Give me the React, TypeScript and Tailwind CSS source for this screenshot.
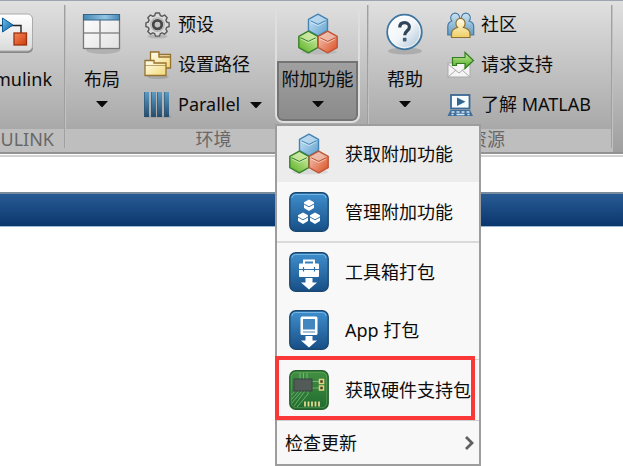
import type { ReactNode } from 'react';

const FONT = "font-['Noto_Sans','Noto_Sans_CJK_SC',sans-serif]";

function Hex({ x, y, fill, light, edge }: { x: number; y: number; fill: string; light: string; edge: string }) {
  return (
    <g transform={`translate(${x} ${y})`} strokeLinejoin="round">
      <path d="M0-10.8 9.5-5.6V5.6L0 10.8-9.5 5.6V-5.6Z" fill={fill} />
      <path d="M0-10 8.7-5.4 0-.8-8.7-5.4Z" fill={light} opacity=".75" />
      <path d="M-7.5-4.2 0-.6 7.5-4.2" fill="none" stroke={edge} strokeWidth="1" />
      <path d="M-7.5-3 0 .6 7.5-3" fill="none" stroke="#fff" strokeWidth=".8" opacity=".6" />
      <path d="M0-10.8 9.5-5.6V5.6L0 10.8-9.5 5.6V-5.6Z" fill="none" stroke={edge} strokeWidth="1.4" />
    </g>
  );
}

function CubesIcon() {
  return (
    <svg viewBox="0 0 40 42" className="h-[42px] w-10" aria-hidden="true">
      <defs>
        <linearGradient id="cb" x1="0" y1="0" x2="1" y2="1"><stop offset="0" stopColor="#d3eafb" /><stop offset="1" stopColor="#5b9ecb" /></linearGradient>
        <linearGradient id="cg" x1="1" y1="0" x2="0.2" y2="1"><stop offset="0" stopColor="#e0f6b8" /><stop offset="1" stopColor="#62b52c" /></linearGradient>
        <linearGradient id="cr" x1="0" y1="0" x2="1" y2="1"><stop offset="0" stopColor="#f2d3c6" /><stop offset="1" stopColor="#dc4a1c" /></linearGradient>
      </defs>
      <ellipse cx="21" cy="39" rx="18" ry="2.5" fill="#000" opacity=".08" />
      <Hex x={20} y={12} fill="url(#cb)" light="#b9d8ee" edge="#4483b3" />
      <Hex x={10.3} y={29} fill="url(#cg)" light="#cfeaa6" edge="#39802f" />
      <Hex x={29.7} y={29} fill="url(#cr)" light="#eec2b2" edge="#bf5638" />
    </svg>
  );
}

function SimulinkIcon() {
  return (
    <svg viewBox="0 0 42 42" className="h-[42px] w-[42px]" aria-hidden="true">
      <defs>
        <linearGradient id="sw" x1="0" y1="0" x2="0" y2="1"><stop offset="0" stopColor="#fff" /><stop offset="1" stopColor="#dadada" /></linearGradient>
        <linearGradient id="so" x1="0" y1="0" x2="1" y2="1"><stop offset="0" stopColor="#f4875a" /><stop offset="1" stopColor="#cf3c0c" /></linearGradient>
        <linearGradient id="sb" x1="0" y1="0" x2="1" y2="1"><stop offset="0" stopColor="#6fc0ec" /><stop offset="1" stopColor="#0a5c9c" /></linearGradient>
      </defs>
      <rect x="0" y="2" width="38" height="38" rx="5" fill="#888" />
      <rect x="0" y="1" width="37.500" height="37" rx="5" fill="url(#sw)" stroke="#aaa" strokeWidth="1" />
      <path d="M2 12.500h24v8" fill="none" stroke="#222" strokeWidth="1.400" />
      <path d="M7.500 5v14L18 12z" fill="url(#sb)" stroke="#0b5a94" />
      <rect x="19" y="20" width="12.500" height="12" fill="url(#so)" stroke="#9c3210" strokeWidth="1.300" />
    </svg>
  );
}

function LayoutIcon() {
  return (
    <svg viewBox="0 0 42 42" className="h-[42px] w-[42px]" aria-hidden="true">
      <defs>
        <linearGradient id="lt" x1="0" y1="0" x2="1" y2="0"><stop offset="0" stopColor="#4587b5" /><stop offset=".6" stopColor="#94c4e1" /><stop offset="1" stopColor="#4587b5" /></linearGradient>
        <linearGradient id="lw" x1="0" y1="0" x2="1" y2="1"><stop offset="0" stopColor="#fff" /><stop offset="1" stopColor="#e2e2e2" /></linearGradient>
      </defs>
      <ellipse cx="22" cy="37" rx="17" ry="4" fill="#000" opacity=".12" />
      <rect x="2.500" y="2" width="36" height="33.500" fill="url(#lw)" stroke="#777" strokeWidth="1.300" />
      <path d="M19 7v28M3 20h35" stroke="#8c8c8c" strokeWidth="1.600" />
      <rect x="2.500" y="1.500" width="36" height="5.500" fill="url(#lt)" stroke="#346587" />
    </svg>
  );
}

function HelpIcon() {
  return (
    <svg viewBox="0 0 42 42" className="h-[42px] w-[42px]" aria-hidden="true">
      <defs>
        <linearGradient id="hg" x1="0" y1="0" x2="1" y2="1"><stop offset="0" stopColor="#fff" /><stop offset=".5" stopColor="#f2f6f9" /><stop offset="1" stopColor="#a5bfd2" /></linearGradient>
      </defs>
      <ellipse cx="21" cy="38" rx="17" ry="3.500" fill="#000" opacity=".14" />
      <circle cx="20.500" cy="19" r="17.300" fill="url(#hg)" stroke="#3f77a3" strokeWidth="1.800" />
      <circle cx="20.500" cy="19" r="15.700" fill="none" stroke="#fff" strokeWidth="1" opacity=".7" />
      <path d="M15.800 14.500c0-3.200 2-4.800 4.800-4.800s4.800 1.600 4.800 4.300c0 3.800-4.700 3.900-4.700 8.300" fill="none" stroke="#2f4359" strokeWidth="3.200" />
      <rect x="18.900" y="24.800" width="3.600" height="3.600" rx=".6" fill="#3d6080" />
    </svg>
  );
}

function GearIcon() {
  return (
    <svg viewBox="0 0 28 28" className="size-7" aria-hidden="true">
      <ellipse cx="13.500" cy="25.500" rx="10" ry="2" fill="#000" opacity=".13" />
      <path
        d="M11.500 2h4l.8 2.500 1.800.8L20.600 4l2.600 2.700-1.300 2.400.8 1.900 2.400.8v3.700l-2.400.8-.8 1.900 1.300 2.400-2.700 2.600-2.400-1.300-1.800.8-.8 2.400h-4l-.8-2.400-1.800-.8-2.400 1.300-2.700-2.600 1.300-2.400-.8-1.900-2.400-.8v-3.700L4.300 11l.8-1.900-1.300-2.400L6.500 4l2.400 1.300 1.800-.8Z"
        fill="#dcdcdc"
        stroke="#5a5a5a"
        strokeWidth="1.400"
        strokeLinejoin="round"
      />
      <circle cx="13.500" cy="13.600" r="6.800" fill="none" stroke="#b5b5b5" strokeWidth="1.200" />
      <circle cx="13.500" cy="13.600" r="4.300" fill="#c4c4c4" stroke="#484848" strokeWidth="2.800" />
    </svg>
  );
}

function FolderIcon() {
  return (
    <svg viewBox="0 0 28 28" className="size-7" aria-hidden="true">
      <defs>
        <linearGradient id="fg" x1="0" y1="0" x2="1" y2="1"><stop offset="0" stopColor="#fffef0" /><stop offset="1" stopColor="#f3d875" /></linearGradient>
      </defs>
      <ellipse cx="14" cy="26" rx="11" ry="2" fill="#000" opacity=".12" />
      <g fill="url(#fg)" stroke="#967230" strokeWidth="1.300">
        <path d="M6.500 1h8.500v2.500h11.500V17h-20Z" />
        <path d="M15 3.500v2.500h11.500" fill="none" />
        <path d="M1 9.500h9V12h12v12.500H1Z" />
        <path d="M1 14.500h21" fill="none" strokeWidth="1" opacity=".6" />
      </g>
    </svg>
  );
}

function ParallelIcon() {
  return (
    <svg viewBox="0 0 28 28" className="size-7" aria-hidden="true">
      <defs>
        <linearGradient id="pg" x1="0" y1="0" x2="0" y2="1"><stop offset="0" stopColor="#5b9cc7" /><stop offset="1" stopColor="#244c6e" /></linearGradient>
      </defs>
      <rect x="1" y="24" width="26" height="3" fill="#000" opacity=".08" />
      {[0, 7, 13, 20].map((x) => (
        <g key={x}><rect x={x} y="1" width="5" height="25" fill="url(#pg)" /><path d={`M${x + 0.5} 1v25`} stroke="#31556f" opacity=".6" /></g>
      ))}
    </svg>
  );
}

function PeopleIcon() {
  return (
    <svg viewBox="0 0 28 28" className="size-7" aria-hidden="true">
      <defs>
        <linearGradient id="py" x1="0" y1="0" x2="0" y2="1"><stop offset="0" stopColor="#fffdee" /><stop offset="1" stopColor="#efce62" /></linearGradient>
        <linearGradient id="pb" x1="0" y1="0" x2="0" y2="1"><stop offset="0" stopColor="#cce3f3" /><stop offset="1" stopColor="#639bc4" /></linearGradient>
      </defs>
      <g fill="url(#pb)" stroke="#427aa5" strokeWidth="1.200">
        <path d="M.8 24V15.500q0-4 4-5.500A4.400 4.800 0 1 1 11.500 10q4 1.500 4 5.500V24Z" />
        <path d="M11.500 24V15.500q0-4 4-5.500A4.400 4.800 0 1 1 22.200 10q4.500 1.500 4.500 5.500V24Z" />
      </g>
      <path d="M4.500 26.500v-3.500q0-5 6-6.500A4.600 5.200 0 1 1 16.500 16.500q6.500 1.500 6.500 6.500v3.500Z" fill="url(#py)" stroke="#8f7130" strokeWidth="1.200" />
    </svg>
  );
}

function SupportIcon() {
  return (
    <svg viewBox="0 0 28 28" className="size-7" aria-hidden="true">
      <defs>
        <linearGradient id="ag" x1="0" y1="0" x2="0" y2="1"><stop offset="0" stopColor="#cdf0a1" /><stop offset="1" stopColor="#46a51c" /></linearGradient>
      </defs>
      <rect x="1" y="12" width="22" height="14" fill="#f5f5f5" stroke="#a9a9a9" />
      <path d="m1 13 11 9L23 13M1 26l8-7m14 7-8-7" fill="none" stroke="#aaa" />
      <path d="M5.500 14.500V6.500H18V1.500L26.500 9.500 18 17.500V12.500H9.500V14.500Z" fill="url(#ag)" stroke="#347d1f" strokeWidth="1.200" />
    </svg>
  );
}

function LearnIcon() {
  return (
    <svg viewBox="0 0 28 28" className="size-7" aria-hidden="true">
      <rect x="4" y="4" width="18.500" height="13.500" fill="#f6fbff" stroke="#3b6994" strokeWidth="1.800" />
      <path d="M10 6.500v8.500l8.500-4.200z" fill="#32658f" />
      <path d="M3.500 19h19.500l3 6H.5Z" fill="#3f6f9b" />
      <path d="M4.500 21h3m2 0h3m2 0h3m2 0h3M4.500 23.500h2m3 0h8m3 0h2" stroke="#d7e9f6" strokeWidth="1.300" />
    </svg>
  );
}

function Tile({ children }: { children: ReactNode }) {
  return (
    <svg viewBox="0 0 40 40" className="size-10" aria-hidden="true">
      <defs>
        <linearGradient id="tg" x1="0" y1="0" x2="0" y2="1"><stop offset="0" stopColor="#3f8fce" /><stop offset="1" stopColor="#184f86" /></linearGradient>
      </defs>
      <rect x=".8" y=".8" width="38.400" height="38.400" rx="6" fill="url(#tg)" stroke="#1b4870" strokeWidth="1.400" />
      <path d="M3 6q0-3.500 3.500-3.500h27Q37 2.500 37 6" fill="none" stroke="#8cc6ee" opacity=".7" />
      {children}
    </svg>
  );
}

const downArrow = <path d="M16.500 26h7v4.500H28L20 37.500l-8-7h4.500Z" fill="#fff" />;

const CLUSTER = [
  { x: 20, y: 13 },
  { x: 14, y: 26 },
  { x: 26, y: 26 },
];

function ManageIcon() {
  return (
    <Tile>
      {CLUSTER.map(({ x, y }) => (
        <g key={x} transform={`translate(${x} ${y})`}>
          <path d="M0-5.500 5-2.800V3L0 6-5 3V-2.800Z" fill="#fff" />
          <path d="M-5-1 0 1.800 5-1" fill="none" stroke="#28659f" strokeWidth=".9" />
        </g>
      ))}
    </Tile>
  );
}

function ToolboxIcon() {
  return (
    <Tile>
      <path d="M15 12V8.500h10V12" fill="none" stroke="#fff" strokeWidth="2" />
      <rect x="10" y="11.500" width="20" height="13.500" rx="1" fill="#fff" />
      <path d="M10 17.500h20M14.500 15v4.500m11-4.500v4.500" stroke="#2e71ad" strokeWidth="1.200" />
      {downArrow}
    </Tile>
  );
}

function PackageAppIcon() {
  return (
    <Tile>
      <rect x="11.500" y="6.500" width="17" height="18.500" rx="1.500" fill="#fff" />
      <rect x="14" y="9" width="12" height="10.500" fill="#4287c0" />
      <path d="M14 22h12" stroke="#4f86b6" strokeWidth="1" />
      {downArrow}
    </Tile>
  );
}

function BoardIcon() {
  return (
    <svg viewBox="0 0 40 40" className="size-10" aria-hidden="true">
      <defs>
        <linearGradient id="bg" x1="0" y1="0" x2="0" y2="1"><stop offset="0" stopColor="#429043" /><stop offset="1" stopColor="#206b2e" /></linearGradient>
      </defs>
      <rect x=".8" y=".8" width="38.400" height="38.400" rx="6" fill="url(#bg)" stroke="#25602c" strokeWidth="1.400" />
      <rect x="2.300" y="2.300" width="35.400" height="35.400" rx="5" fill="none" stroke="#72b06e" strokeWidth=".8" opacity=".6" />
      <path d="M11 3v6m3.500-6v6m3.500-6v6M23 11.500h8M23 18h8M7 20 2.500 25M10 21 2.500 29.500M13 21 3 33M16 21 5 36M19 21v3L8 37" fill="none" stroke="#8cc487" strokeWidth=".9" opacity=".8" />
      <rect x="5" y="9" width="18" height="12" fill="#535b59" stroke="#39443f" />
      <g fill="#473f1d" stroke="#e4d287" strokeWidth="1.500"><rect x="30.500" y="9.500" width="4" height="4" /><rect x="30.500" y="16" width="4" height="4" /></g>
      <path d="M16 31.500v5m3.500-5v5m3.500-5v5m3.500-5v5m3.500-5v5" stroke="#e4d893" strokeWidth="1.800" />
    </svg>
  );
}

function Caret() {
  return (
    <svg viewBox="0 0 12 6" className="h-1.5 w-3 shrink-0" aria-hidden="true"><path d="M0 0h12L6.500 6h-1Z" fill="#0a0a0a" /></svg>
  );
}

function BigButton({ icon, label }: { icon: ReactNode; label: string }) {
  return (
    <button type="button" className="flex w-[72px] shrink-0 flex-col items-center pt-2">
      {icon}
      <span className="mt-3 whitespace-nowrap">{label}</span>
      <span className="mt-2.5 flex"><Caret /></span>
    </button>
  );
}

function SmallButton({ icon, label, caret }: { icon: ReactNode; label: string; caret?: boolean }) {
  return (
    <button type="button" className="flex h-10 items-center whitespace-nowrap">
      {icon}
      <span className="ml-1.5 pb-0.5">{label}</span>
      {caret && <span className="ml-2.5"><Caret /></span>}
    </button>
  );
}

function Section({ title, className, titleClass, children }: { title: string; className: string; titleClass: string; children: ReactNode }) {
  return (
    <section className={`relative flex shrink-0 flex-col ${className}`}>
      <div className="flex h-32 pt-1">{children}</div>
      <h2 className={`flex h-[23px] items-center bg-[#bebebe] pb-1 text-[#686868] ${titleClass}`}>{title}</h2>
      <span className="absolute top-1 right-0 bottom-1 w-0.5 border-r border-[#c2c2c2] bg-[#9f9f9f]" />
    </section>
  );
}

function MenuItem({ icon, label, className }: { icon: ReactNode; label: string; className: string }) {
  return (
    <button type="button" role="menuitem" className={`flex w-full items-center gap-4 pl-3 whitespace-nowrap ${className}`}>
      {icon}
      <span>{label}</span>
    </button>
  );
}

function AddOnsMenu() {
  return (
    <div role="menu" className="absolute top-[119px] left-0 z-10 w-[206px] border-2 border-[#9d9d9d] bg-[#f8f8f8]">
      <MenuItem icon={<CubesIcon />} label="获取附加功能" className="h-14 bg-[#ececec]" />
      <MenuItem icon={<ManageIcon />} label="管理附加功能" className="h-[59px]" />
      <div className="border-t-2 border-[#dadada]">
        <MenuItem icon={<ToolboxIcon />} label="工具箱打包" className="h-[58px]" />
        <MenuItem icon={<PackageAppIcon />} label="App 打包" className="h-[58px]" />
      </div>
      <div className="relative border-t border-[#d2d2d2]">
        <MenuItem icon={<BoardIcon />} label="获取硬件支持包" className="h-[60px]" />
        <span className="absolute -top-1 right-1 bottom-0 -left-0.5 border-4 border-[#fa3838]" />
      </div>
      <button type="button" role="menuitem" className="flex h-11 w-full items-center justify-between border-t border-[#cfcfcf] pr-1 pl-2">
        <span>检查更新</span>
        <svg viewBox="0 0 12 14" className="h-3.5 w-3" aria-hidden="true"><path d="m3 1 6 6-6 6" fill="none" stroke="#606060" strokeWidth="2.800" /></svg>
      </button>
    </div>
  );
}

export default function App() {
  return (
    <div className={`min-h-screen w-full overflow-hidden bg-white text-lg leading-6 text-[#0c0c0c] ${FONT}`}>
      <header className="flex border-t border-b-2 border-t-[#9ba5b0] border-b-[#929292] bg-linear-to-b from-[#e0e0e0] to-[#9f9f9f]">
        <Section title="SIMULINK" className="w-[66px] overflow-hidden" titleClass="justify-end pr-3">
          <div className="flex w-full justify-end pr-3.5">
            <button type="button" className="flex flex-col items-center pt-2">
              <SimulinkIcon />
              <span className="mt-3">Simulink</span>
            </button>
          </div>
        </Section>
        <Section title="环境" className="w-[303px]" titleClass="justify-center pr-2">
          <BigButton icon={<LayoutIcon />} label="布局" />
          <div className="ml-1.5 flex w-[131px] flex-col items-start">
            <SmallButton icon={<GearIcon />} label="预设" />
            <SmallButton icon={<FolderIcon />} label="设置路径" />
            <SmallButton icon={<ParallelIcon />} label="Parallel" caret />
          </div>
          <div className="relative h-[119px]">
            <button type="button" aria-haspopup="menu" aria-expanded="true" className="flex h-[118px] w-[85px] flex-col items-center overflow-hidden rounded-lg border-2 border-[#dedede]">
              <span className="flex h-[54px] w-full items-end justify-center pb-1.5"><CubesIcon /></span>
              <span className="flex w-full flex-1 flex-col items-center rounded-b-md border-2 border-[#747474] bg-linear-to-b from-[#a0a0a0] to-[#8b8b8b] pt-1">
                <span className="whitespace-nowrap">附加功能</span>
                <span className="mt-2.5 flex"><Caret /></span>
              </span>
            </button>
            <AddOnsMenu />
          </div>
        </Section>
        <Section title="资源" className="w-[244px]" titleClass="justify-center pr-2">
          <BigButton icon={<HelpIcon />} label="帮助" />
          <div className="ml-1.5 flex flex-col items-start">
            <SmallButton icon={<PeopleIcon />} label="社区" />
            <SmallButton icon={<SupportIcon />} label="请求支持" />
            <SmallButton icon={<LearnIcon />} label="了解 MATLAB" />
          </div>
        </Section>
      </header>
      <div className="mt-px h-[37px] border-t-2 border-[#d2d2d2] bg-white" />
      <div className="h-[35px] border-t-2 border-b border-t-[#7a8b9d] border-b-[#9db8d2] bg-linear-to-b from-[#285b95] to-[#0a376c]" />
      <main className="bg-white" />
    </div>
  );
}
